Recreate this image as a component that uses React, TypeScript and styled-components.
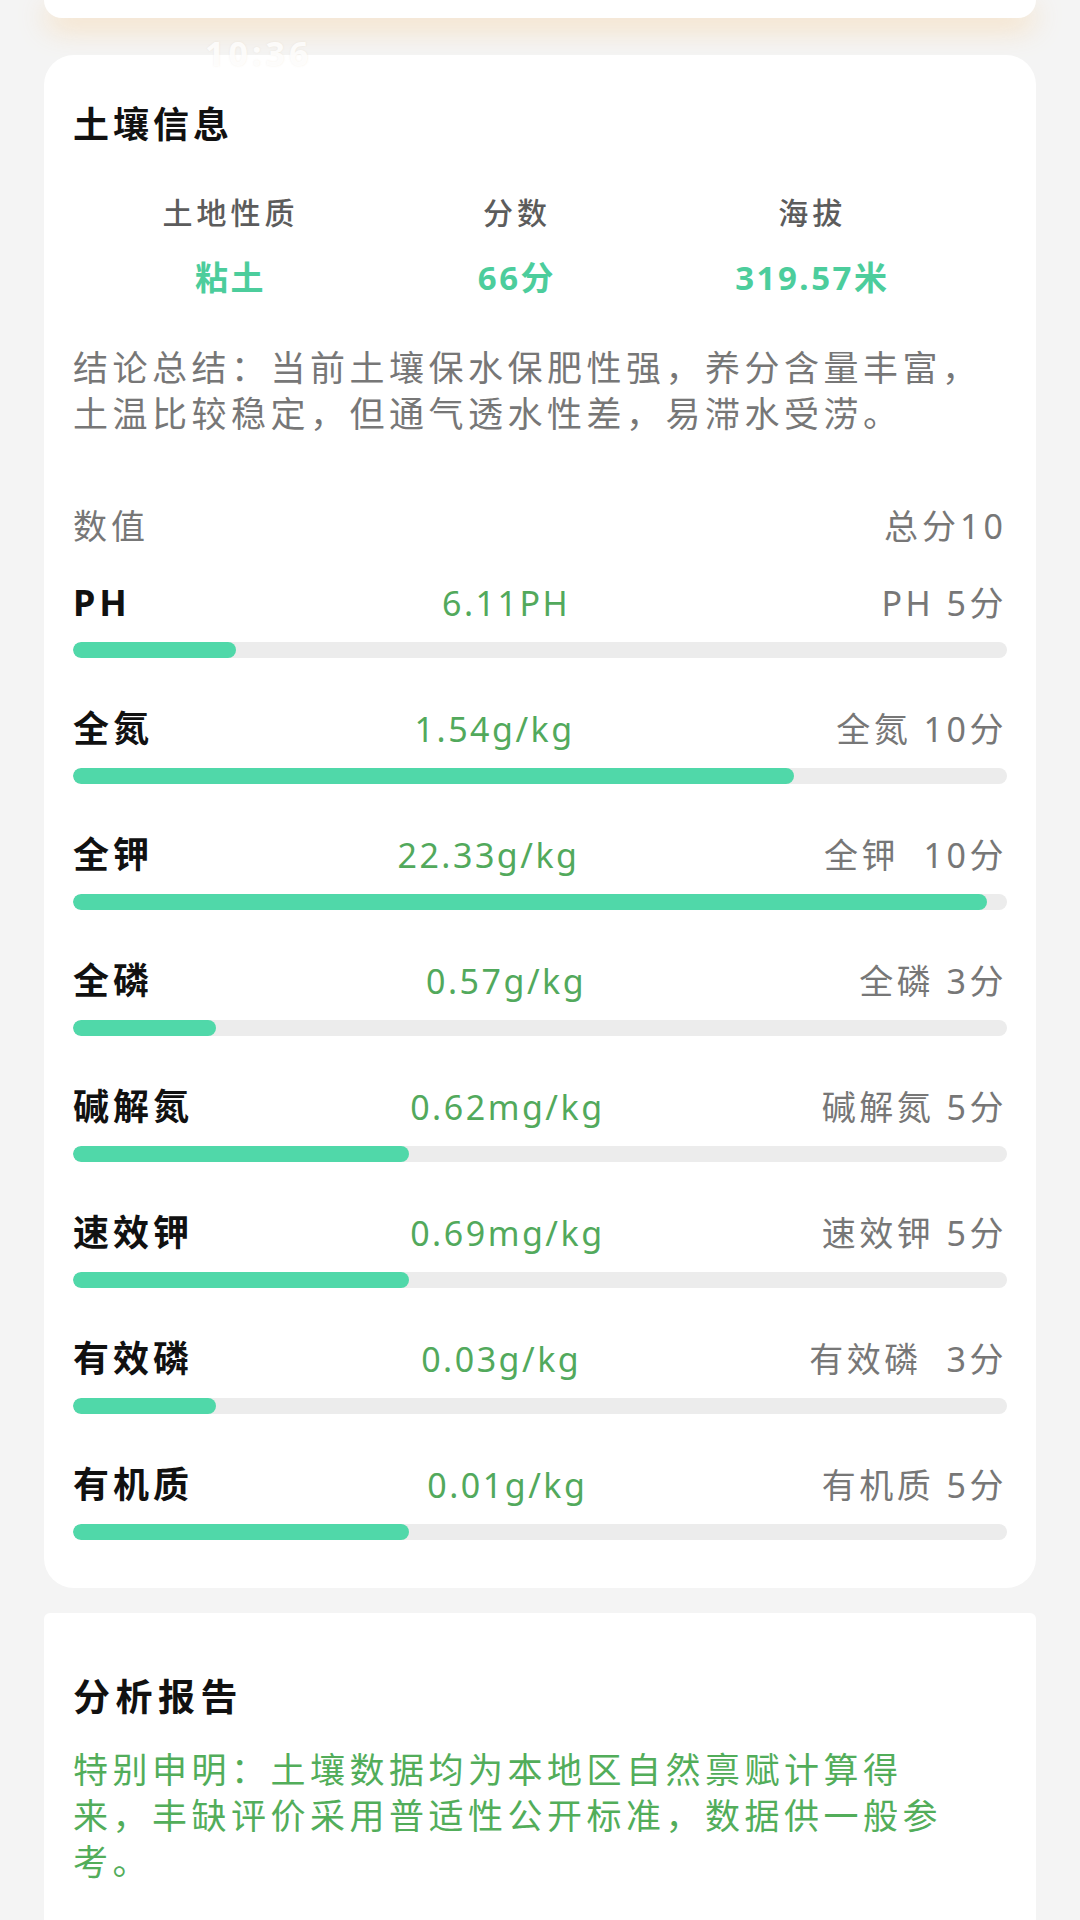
import React from 'react'
import styled, { createGlobalStyle } from 'styled-components'

const GlobalStyle = createGlobalStyle`
  html, body {
    margin: 0;
    padding: 0;
    background: #f4f4f4;
  }
  body {
    font-family: 'Noto Sans', 'Noto Sans CJK SC', sans-serif;
  }
  * {
    box-sizing: border-box;
  }
`

const Page = styled.div`
  position: relative;
  width: 1080px;
  height: 1920px;
  overflow: hidden;
  background: #f4f4f4;
  padding: 0 44px;
`

// faded status bar left over from the stitched screenshot
const GhostStatus = styled.div`
  position: absolute;
  top: 30px;
  left: 205px;
  font-size: 34px;
  font-weight: 700;
  letter-spacing: 4px;
  color: rgba(255, 255, 255, 0.85);
  text-shadow: 0 0 2px rgba(200, 170, 130, 0.18);
`

const TopCard = styled.div`
  height: 18px;
  background: #fff;
  border-radius: 0 0 30px 30px;
  box-shadow: 0 10px 28px rgba(251, 196, 120, 0.45);
`

const Card = styled.section<{ $top: number; $radius: number }>`
  margin-top: ${({ $top }) => $top}px;
  background: #fff;
  border-radius: ${({ $radius }) => $radius}px;
  padding: 45px 29px 48px;
`

const Title = styled.h2<{ $size: number; $spacing: number }>`
  margin: 0;
  font-size: ${({ $size }) => $size}px;
  letter-spacing: ${({ $spacing }) => $spacing}px;
  line-height: 50px;
  font-weight: 700;
  color: #111;
`

const Summary = styled.div`
  display: flex;
  justify-content: space-around;
  padding-right: 28px;
  margin-top: 41px;
`

const SummaryCol = styled.div`
  display: flex;
  flex-direction: column;
  align-items: center;
`

const SummaryLabel = styled.div`
  font-size: 30px;
  letter-spacing: 4px;
  line-height: 44px;
  font-weight: 500;
  color: #5c5c5c;
`

const SummaryValue = styled.div`
  margin-top: 21px;
  font-size: 33px;
  letter-spacing: 2.5px;
  line-height: 44px;
  font-weight: 700;
  color: #4ccd9c;
`

const Conclusion = styled.p`
  margin: 45px 0 0;
  font-size: 35px;
  letter-spacing: 4.5px;
  line-height: 46px;
  color: #777;
`

const ScoreHead = styled.div`
  display: flex;
  justify-content: space-between;
  margin-top: 66px;
  font-size: 34px;
  letter-spacing: 4px;
  line-height: 46px;
  color: #777;
`

const MetricList = styled.div`
  margin-top: 31px;
  display: flex;
  flex-direction: column;
  gap: 48px;
`

const Metric = styled.div`
  display: flex;
  flex-direction: column;
  gap: 16px;
`

const MetricRow = styled.div`
  display: flex;
  align-items: center;
  line-height: 46px;
  height: 46px;
`

const MetricName = styled.div`
  font-size: 36px;
  letter-spacing: 4px;
  font-weight: 700;
  color: #111;
`

const MetricValue = styled.div`
  flex: 1;
  text-align: center;
  font-size: 34px;
  letter-spacing: 2.5px;
  color: #52a95c;
`

const MetricScore = styled.div`
  font-size: 34px;
  letter-spacing: 3.5px;
  white-space: pre;
  color: #777;
`

const Track = styled.div`
  height: 16px;
  border-radius: 8px;
  background: #ececec;
  overflow: hidden;
`

const Fill = styled.div`
  height: 100%;
  border-radius: 8px;
  background: #50d8a9;
`

const Notice = styled.p`
  margin: 25px 0 0;
  max-width: 890px;
  font-size: 35px;
  letter-spacing: 4.5px;
  line-height: 46px;
  color: #52ad5a;
`

const summary = [
  { label: '土地性质', value: '粘土' },
  { label: '分数', value: '66分' },
  { label: '海拔', value: '319.57米' },
]

const metrics = [
  { name: 'PH', value: '6.11PH', score: 'PH 5分', pct: 17.5 },
  { name: '全氮', value: '1.54g/kg', score: '全氮 10分', pct: 77.2 },
  { name: '全钾', value: '22.33g/kg', score: '全钾  10分', pct: 97.9 },
  { name: '全磷', value: '0.57g/kg', score: '全磷 3分', pct: 15.3 },
  { name: '碱解氮', value: '0.62mg/kg', score: '碱解氮 5分', pct: 36 },
  { name: '速效钾', value: '0.69mg/kg', score: '速效钾 5分', pct: 36 },
  { name: '有效磷', value: '0.03g/kg', score: '有效磷  3分', pct: 15.3 },
  { name: '有机质', value: '0.01g/kg', score: '有机质 5分', pct: 36 },
]

const App = () => {
  return (
    <>
      <GlobalStyle />
      <Page>
        <TopCard />
        <GhostStatus>10:36</GhostStatus>
        <Card $top={37} $radius={30}>
          <Title $size={36} $spacing={4}>土壤信息</Title>
          <Summary>
            {summary.map(item => (
              <SummaryCol key={item.label}>
                <SummaryLabel>{item.label}</SummaryLabel>
                <SummaryValue>{item.value}</SummaryValue>
              </SummaryCol>
            ))}
          </Summary>
          <Conclusion>
            结论总结：当前土壤保水保肥性强，养分含量丰富，土温比较稳定，但通气透水性差，易滞水受涝。
          </Conclusion>
          <ScoreHead>
            <span>数值</span>
            <span>总分10</span>
          </ScoreHead>
          <MetricList>
            {metrics.map(m => (
              <Metric key={m.name}>
                <MetricRow>
                  <MetricName>{m.name}</MetricName>
                  <MetricValue>{m.value}</MetricValue>
                  <MetricScore>{m.score}</MetricScore>
                </MetricRow>
                <Track>
                  <Fill style={{ width: `${m.pct}%` }} />
                </Track>
              </Metric>
            ))}
          </MetricList>
        </Card>
        <Card $top={25} $radius={6}>
          <Title $size={37} $spacing={5.5} style={{ marginTop: 14 }}>分析报告</Title>
          <Notice>
            特别申明：土壤数据均为本地区自然禀赋计算得来，丰缺评价采用普适性公开标准，数据供一般参考。
          </Notice>
        </Card>
      </Page>
    </>
  )
}

export default App
